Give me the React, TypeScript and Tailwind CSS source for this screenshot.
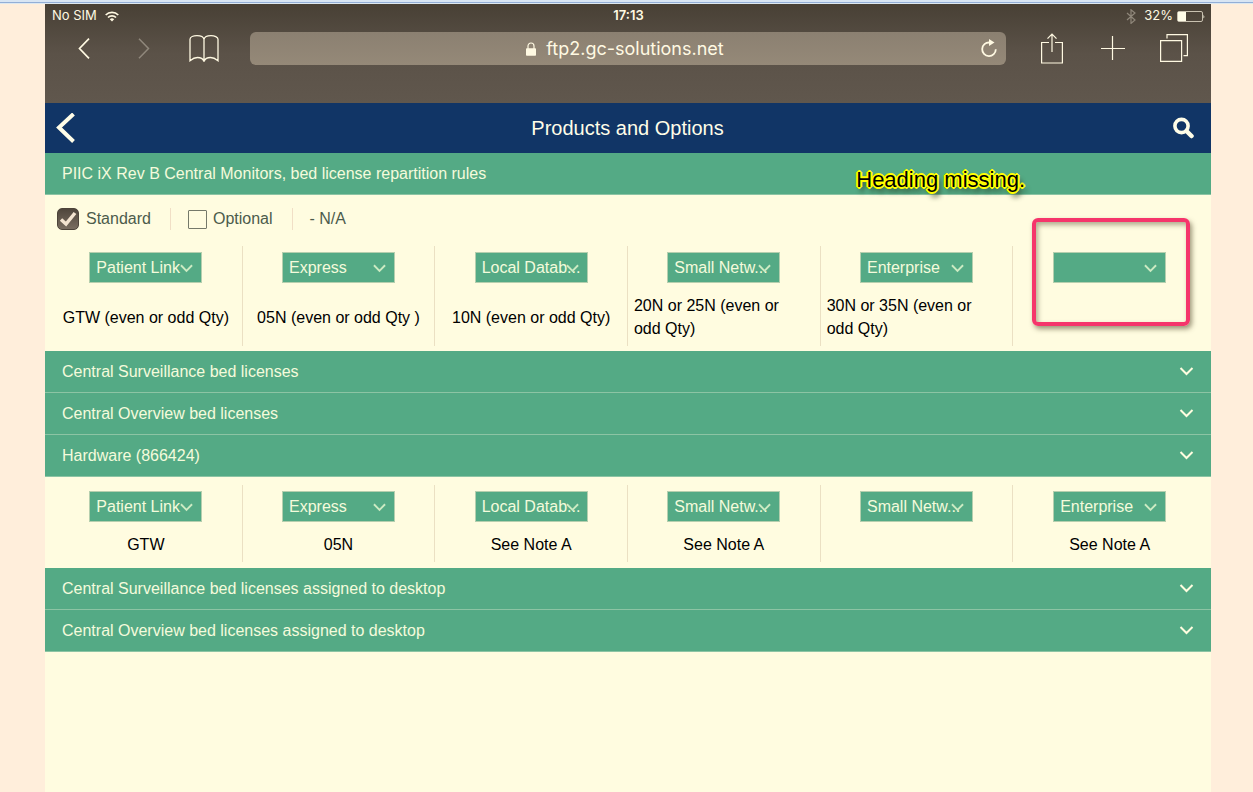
import type { ReactNode } from "react";

type Column = { label: string; value: string };

const licenseColumns: Column[] = [
  { label: "Patient Link", value: "GTW (even or odd Qty)" },
  { label: "Express", value: "05N (even or odd Qty )" },
  { label: "Local Datab...", value: "10N (even or odd Qty)" },
  { label: "Small Netw...", value: "20N or 25N (even or odd\u00a0Qty)" },
  { label: "Enterprise", value: "30N or 35N (even or odd\u00a0Qty)" },
  { label: "", value: "" },
];

const hardwareColumns: Column[] = [
  { label: "Patient Link", value: "GTW" },
  { label: "Express", value: "05N" },
  { label: "Local Datab...", value: "See Note A" },
  { label: "Small Netw...", value: "See Note A" },
  { label: "Small Netw...", value: "" },
  { label: "Enterprise", value: "See Note A" },
];

function StatusBar() {
  return (
    <div className="grid h-6 grid-cols-3 items-center pl-[7px] pr-[6px] text-[13px]">
      <div className="flex items-center gap-2">
        <span>No SIM</span>
        <svg width="14" height="11" viewBox="0 0 14 11" fill="none" stroke="currentColor" strokeWidth="1.7" aria-hidden="true">
          <path d="M0.7 4A9 9 0 0 1 13.3 4" />
          <path d="M3 6.5A5.7 5.7 0 0 1 11 6.5" />
          <path d="M7 10.6L4.8 8.3a3.2 3.2 0 0 1 4.4 0z" fill="currentColor" stroke="none" />
        </svg>
      </div>
      <time className="text-center font-semibold">17:13</time>
      <div className="flex items-center justify-end gap-1">
        <svg width="10" height="15" viewBox="0 0 10 15" fill="none" stroke="#8f877a" strokeWidth="1.2" className="mr-1" aria-hidden="true">
          <path d="M1 4l8 7-4 3.4V0.8L9 4l-8 7" />
        </svg>
        <span>32%</span>
        <svg width="28" height="11" viewBox="0 0 28 11" aria-hidden="true">
          <rect x="0.5" y="0.5" width="25" height="10" rx="1.5" fill="none" stroke="#c8c1b0" />
          <rect x="1" y="1" width="8" height="9" fill="#fffde8" />
          <path d="M26.5 3.5q1.5 2 0 4z" fill="#fffde8" />
        </svg>
      </div>
    </div>
  );
}

function ToolButton({ label, children }: { label: string; children: ReactNode }) {
  return (
    <button type="button" aria-label={label} className="flex h-8 w-8 items-center justify-center">
      {children}
    </button>
  );
}

function BrowserBar() {
  return (
    <div className="flex h-[75px] items-start gap-[30px] pl-[23px] pr-[21px] pt-1">
      <div className="flex gap-7">
        <ToolButton label="Back">
          <svg width="12" height="21" viewBox="0 0 12 21" fill="none" stroke="currentColor" strokeWidth="1.7">
            <path d="M11 0.7L1.5 10.5l9.5 9.8" />
          </svg>
        </ToolButton>
        <ToolButton label="Forward">
          <svg width="12" height="21" viewBox="0 0 12 21" fill="none" stroke="#90887c" strokeWidth="1.5">
            <path d="M1 0.7l9.5 9.8L1 20.3" />
          </svg>
        </ToolButton>
        <ToolButton label="Bookmarks">
          <svg width="30" height="28" viewBox="0 0 30 28" fill="none" stroke="currentColor" strokeWidth="1.3">
            <path d="M15 27.300V5.500C14.500 2.800 11.500 1.700 8 1.700S1 3 1 5.300v21.500C3.500 24.700 6 23.500 8.500 23.500c3 0 5.500 1.300 6.500 3.800 1-2.500 3.500-3.800 6.500-3.800 2.500 0 5 1.200 7.500 3.300V5.300c0-2.300-3.500-3.600-7-3.600s-6.500 1.100-7 3.800" />
          </svg>
        </ToolButton>
      </div>
      <div className="flex h-[33px] flex-1 items-center rounded-md bg-gradient-to-b from-[#8b8071] to-[#958978] px-2">
        <a href="https://ftp2.gc-solutions.net" className="ml-3 flex flex-1 items-center justify-center gap-[10px] text-[18px]">
          <svg width="10" height="14" viewBox="0 0 10 14" aria-hidden="true">
            <path d="M2 7V4a3 3 0 0 1 6 0v3" fill="none" stroke="currentColor" strokeWidth="1.2" />
            <rect y="6.300" width="10" height="7.500" rx="0.800" fill="currentColor" />
          </svg>
          ftp2.gc-solutions.net
        </a>
        <button type="button" aria-label="Reload">
          <svg width="18" height="19" viewBox="0 0 18 19" fill="none" stroke="currentColor" strokeWidth="1.800">
            <path d="M9.500 3.500A6.800 6.800 0 1 0 15.800 10.300" />
            <path d="M9 0L14.500 3.500 9 7z" fill="currentColor" stroke="none" />
          </svg>
        </button>
      </div>
      <div className="flex gap-[29px]">
        <ToolButton label="Share">
          <svg width="22" height="31" viewBox="0 0 22 31" fill="none" stroke="currentColor" strokeWidth="1.200">
            <path d="M8 9.500H0.600V30h20.800V9.500H14M11 19V1.200M6.500 5.700L11 1.200l4.500 4.500" />
          </svg>
        </ToolButton>
        <ToolButton label="New tab">
          <svg width="24" height="24" viewBox="0 0 24 24" stroke="currentColor" strokeWidth="1.200">
            <path d="M11.500 0v24M0 12.500h24" />
          </svg>
        </ToolButton>
        <ToolButton label="Tabs">
          <svg width="28" height="28" viewBox="0 0 28 28" fill="none" stroke="currentColor" strokeWidth="1.200">
            <path d="M0.600 6.600h21v20.800h-21zM7 4.500V0.600h20.400v21H23.500" />
          </svg>
        </ToolButton>
      </div>
    </div>
  );
}

function Chevron({ className }: { className: string }) {
  return (
    <svg viewBox="0 0 14 9" fill="none" stroke="currentColor" strokeWidth="2" className={className} aria-hidden="true">
      <path d="M1 1l6 6 6-6" />
    </svg>
  );
}

function SectionBar({ title }: { title: string }) {
  return (
    <button
      type="button"
      className="flex h-[42px] w-full items-center justify-between border-b border-[#8cc4a4] bg-[#54aa85] pl-[17px] pr-[17px] text-left text-[#f4fbdc]"
    >
      {title}
      <Chevron className="h-[9px] w-[15px] text-[#fffde0]" />
    </button>
  );
}

function ProductTable({ name, columns, highlightLast }: { name: string; columns: Column[]; highlightLast?: boolean }) {
  return (
    <table aria-label={name} className="w-full table-fixed border-separate border-spacing-0">
      <thead>
        <tr>
          {columns.map((column, i) => (
            <th key={i} className="relative h-[42px] border-r border-[#ebe0c3] p-0 pt-[6px] align-top font-normal last:border-r-0">
              <div className="relative mx-auto w-[113px]">
                <select
                  aria-label={`${name} column ${i + 1}`}
                  className="block h-[31px] w-full appearance-none border border-[#b5cfae] bg-[#54aa85] pl-[6px] text-[#f4fbdc]"
                >
                  <option>{column.label}</option>
                </select>
                <Chevron className="pointer-events-none absolute right-[9px] top-3 h-[9px] w-[13px] text-[#cdebc3]" />
              </div>
              {highlightLast && i === columns.length - 1 && (
                <div className="pointer-events-none absolute -top-7 left-[19px] h-[108px] w-[158px] rounded-md border-4 border-[#f5356b] shadow-[2px_3px_5px_rgba(60,50,20,0.5),inset_2px_3px_5px_rgba(60,50,20,0.4)]" />
              )}
            </th>
          ))}
        </tr>
      </thead>
      <tbody>
        <tr>
          {columns.map((column, i) => (
            <td key={i} className="h-[34px] border-r border-[#ebe0c3] px-[6px] py-[6px] align-middle leading-[23px] last:border-r-0">
              <div className="flex justify-center">
                <span>{column.value}</span>
              </div>
            </td>
          ))}
        </tr>
      </tbody>
    </table>
  );
}

function Legend() {
  return (
    <div className="flex h-[51px] items-center pb-[3px] pl-3 text-[#4c5b4c]">
      <label className="flex items-center gap-[7px]">
        <span className="relative flex h-[22px] w-[22px]">
          <input type="checkbox" defaultChecked className="h-full w-full appearance-none rounded-[5px] border border-[#4d443a] bg-gradient-to-b from-[#4f463c] to-[#796d60]" />
          <svg viewBox="0 0 22 22" className="pointer-events-none absolute inset-0" fill="none" stroke="#f3e4d0" strokeWidth="3.500" aria-hidden="true">
            <path d="M4 11.500l5 4.500L18 5" />
          </svg>
        </span>
        Standard
      </label>
      <span className="ml-[19px] mr-[17px] h-[22px] w-px bg-[#f1dfc6]" />
      <label className="flex items-center gap-[6px]">
        <input type="checkbox" className="h-[19px] w-[19px] appearance-none rounded-[1px] border border-[#75796a]" />
        Optional
      </label>
      <span className="ml-[19px] mr-[17px] h-[22px] w-px bg-[#f1dfc6]" />
      <span>- N/A</span>
    </div>
  );
}

export default function App() {
  return (
    <div className="flex min-h-screen flex-col bg-[#ffeedb] font-['Liberation_Sans',Arial,sans-serif] text-[16px]">
      <div className="h-1 border-b border-[#dde8f0] bg-[#d8e5f3] pt-[2px]">
        <div className="h-px bg-[#93aed6]" />
      </div>
      <div className="ml-[45px] mr-[42px] flex flex-1 flex-col bg-[#fffce0]">
        <header className="bg-gradient-to-b from-[#484035] via-[#5b5248] to-[#60574d] font-['Inter','Liberation_Sans',sans-serif] text-[#fff9e2]">
          <StatusBar />
          <BrowserBar />
        </header>
        <nav className="flex h-[50px] items-center justify-between bg-[#113566] pl-[11px] pr-[17px] text-[#fffde8]">
          <button type="button" aria-label="Back to previous page">
            <svg width="20" height="31" viewBox="0 0 20 31" fill="none" stroke="currentColor" strokeWidth="4">
              <path d="M17.500 1L3 14.500l14.500 14" />
            </svg>
          </button>
          <h1 className="flex-1 pl-[6px] text-center text-[20px]">Products and Options</h1>
          <button type="button" aria-label="Search">
            <svg width="21" height="22" viewBox="0 0 21 22" fill="none" stroke="currentColor">
              <circle cx="8.500" cy="9" r="6.600" strokeWidth="3.600" />
              <path d="M13.500 14l5 5" strokeWidth="4.500" strokeLinecap="round" />
            </svg>
          </button>
        </nav>
        <main>
          <div className="relative flex h-[42px] items-center border-b border-[#8cc4a4] bg-[#54aa85] pl-[17px] text-[#f4fbdc]">
            <h2>PIIC iX Rev B Central Monitors, bed license repartition rules</h2>
            <span className="absolute right-[186px] top-[10px] text-[22px] whitespace-nowrap text-black [text-shadow:1px_0_#ff0,-1px_0_#ff0,0_1px_#ff0,0_-1px_#ff0,1px_1px_#ff0,-1px_-1px_#ff0,1px_-1px_#ff0,-1px_1px_#ff0,2px_0_#ff0,-2px_0_#ff0,0_2px_#ff0,0_-2px_#ff0,3px_5px_5px_#2a3a20]">
              Heading missing.
            </span>
          </div>
          <Legend />
          <div className="px-[5px] pb-[5px]">
            <ProductTable name="Bed license repartition" columns={licenseColumns} highlightLast />
          </div>
          <SectionBar title="Central Surveillance bed licenses" />
          <SectionBar title="Central Overview bed licenses" />
          <SectionBar title="Hardware (866424)" />
          <div className="px-[5px] pb-[6px] pt-2">
            <ProductTable name="Hardware (866424)" columns={hardwareColumns} />
          </div>
          <SectionBar title="Central Surveillance bed licenses assigned to desktop" />
          <SectionBar title="Central Overview bed licenses assigned to desktop" />
        </main>
      </div>
    </div>
  );
}
